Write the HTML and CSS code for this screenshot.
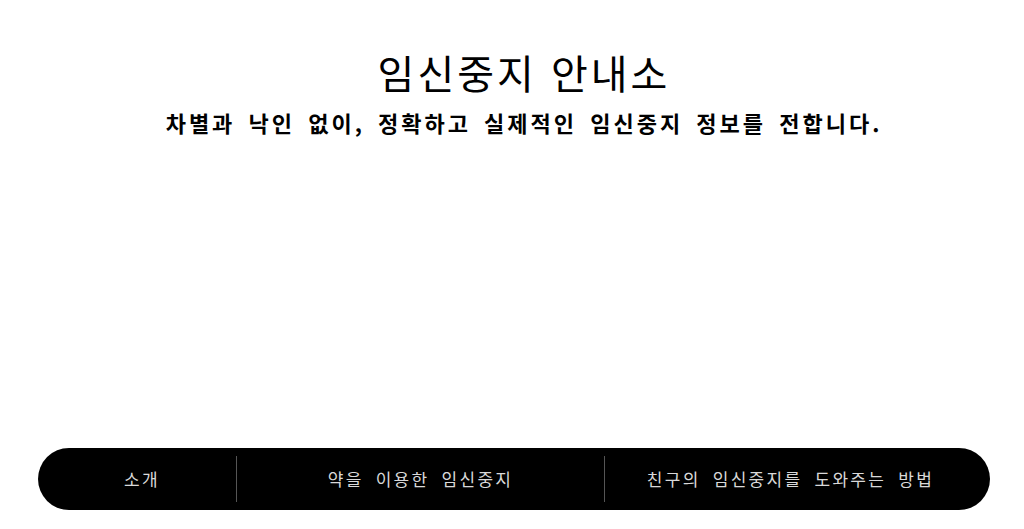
FILE: index.html
```html
<!DOCTYPE html>
<html lang="ko">
<head>
<meta charset="utf-8">
<title>임신중지 안내소</title>
<link rel="stylesheet" href="styles.css">
</head>
<body>
<div class="page">
  <header class="hero">
    <h1 class="title">임신중지 안내소</h1>
    <p class="subtitle">차별과 낙인 없이, 정확하고 실제적인 임신중지 정보를 전합니다.</p>
  </header>
  <nav class="nav">
    <a class="nav-item first" href="#">소개</a>
    <a class="nav-item" href="#">약을 이용한 임신중지</a>
    <a class="nav-item last" href="#">친구의 임신중지를 도와주는 방법</a>
  </nav>
</div>
</body>
</html>
```
FILE: styles.css
```css
html, body {
  margin: 0;
  padding: 0;
  background: #fff;
}
body {
  font-family: "Noto Sans CJK KR", "Noto Sans", sans-serif;
  color: #000;
}
.page {
  height: 529px;
  display: flex;
  flex-direction: column;
}
.hero {
  display: flex;
  flex-direction: column;
  align-items: center;
  padding-left: 24px;
  padding-top: 48px;
}
.title {
  margin: 0;
  font-size: 40px;
  font-weight: 400;
  line-height: 48px;
  letter-spacing: 3px;
}
.subtitle {
  margin: 11px 0 0;
  font-size: 22px;
  font-weight: 700;
  line-height: 30px;
  letter-spacing: 3px;
  word-spacing: 4px;
}
.nav {
  margin: auto 0 19px 38px;
  width: 952px;
  height: 62px;
  box-sizing: border-box;
  background: #000;
  border-radius: 31px;
  display: grid;
  grid-template-columns: 188px 368px 1fr;
  padding: 0 14px 0 10px;
  align-items: center;
}
.nav-item {
  color: #d9d9d9;
  text-decoration: none;
  font-size: 17px;
  letter-spacing: 2.3px;
  word-spacing: 5px;
  text-align: center;
  line-height: 46px;
  border-left: 1px solid #555;
}
.nav-item.first {
  border-left: none;
}
```
